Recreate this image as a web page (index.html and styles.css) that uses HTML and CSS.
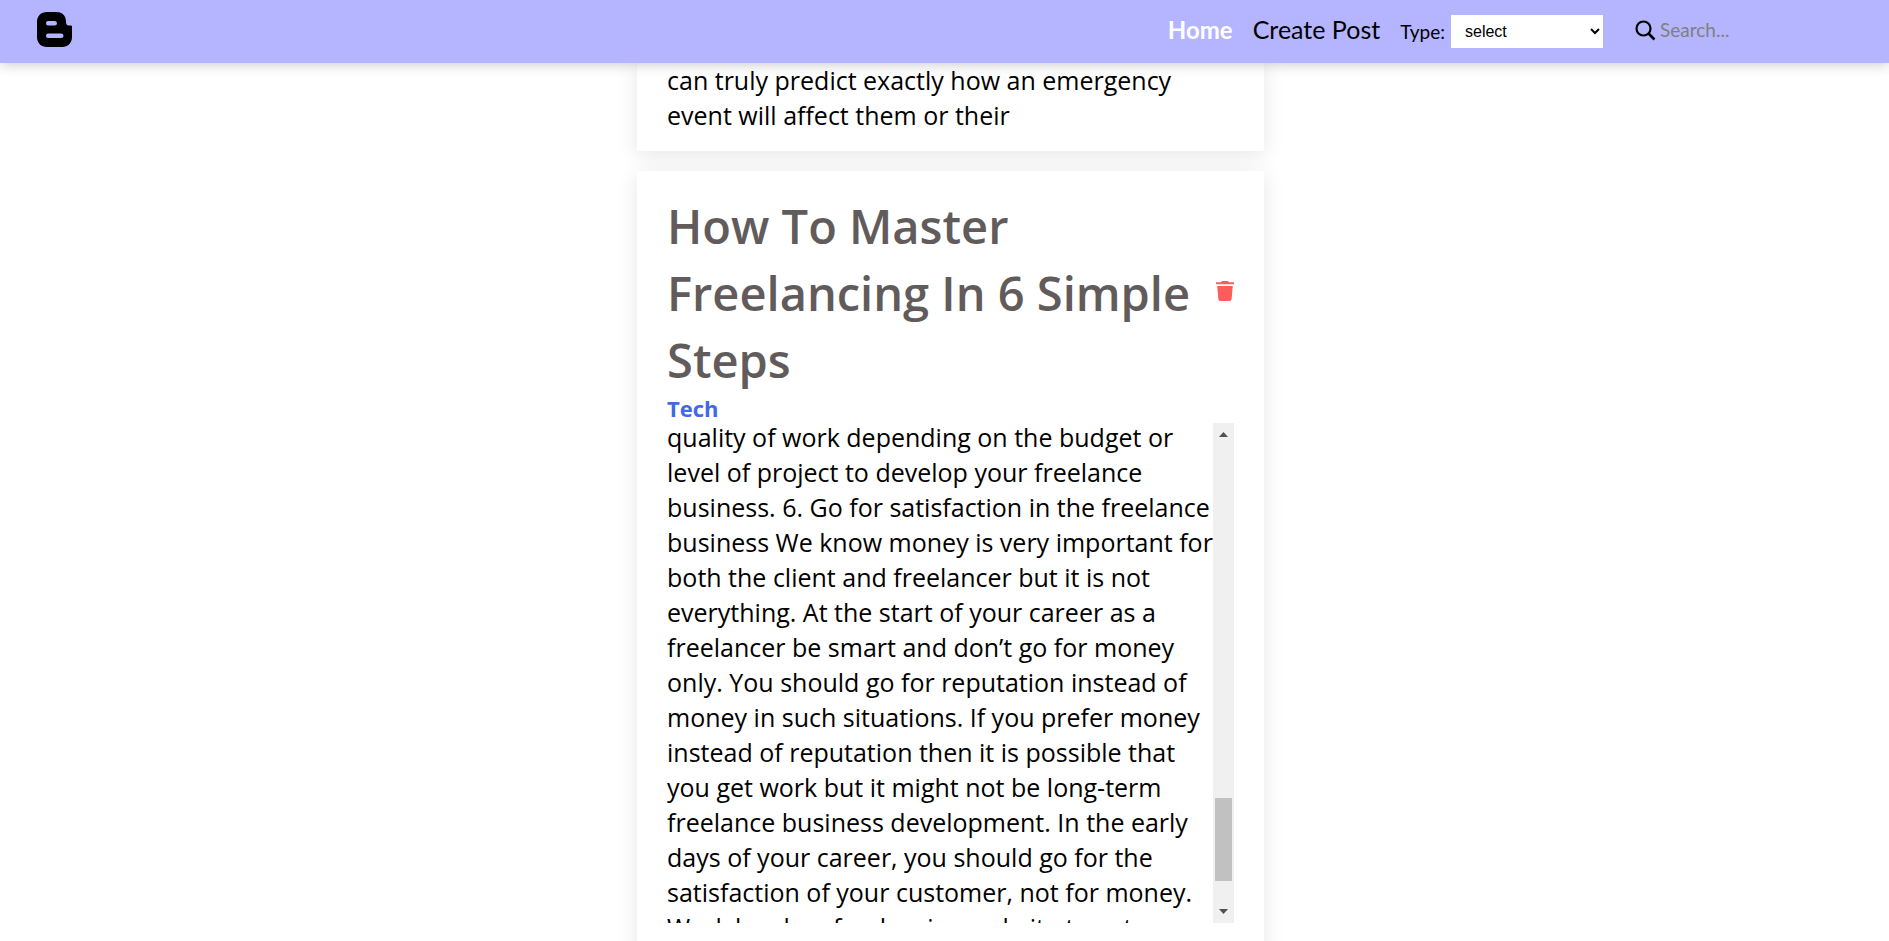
FILE: index.html
```html
<!DOCTYPE html>
<html lang="en">
<head>
<meta charset="utf-8">
<title>Blog</title>
<link rel="stylesheet" href="styles.css">
</head>
<body>
<header class="navbar">
  <a class="logo" href="#" aria-label="Blog home">
    <svg viewBox="0 0 36 36" width="36" height="36" aria-hidden="true">
      <path fill-rule="evenodd" d="M10 0H19.500C25.500 0 29 4 29 9.500C29 12 29.800 13.400 32 13.400H33.800Q35 13.400 35 14.600V25C35 31 31 35 25 35H10C4 35 0 31 0 25V10C0 4 4 0 10 0ZM11 9Q9 9 9 11.250Q9 13.500 11 13.500H17.500Q20 13.500 20 11.250Q20 9 17.500 9ZM11 21.500Q9 21.500 9 23.750Q9 26 11 26H24Q26.500 26 26.500 23.750Q26.500 21.500 24 21.500Z"/>
    </svg>
  </a>
  <nav class="links">
    <a class="link active" href="#">Home</a>
    <a class="link" href="#">Create Post</a>
  </nav>
  <div class="filter">
    <label for="type">Type:</label>
    <select id="type" class="select"><option>select</option></select>
  </div>
  <div class="search">
    <label for="q" aria-label="Search">
      <svg class="glass" viewBox="0 0 21 21" width="21" height="21" aria-hidden="true"><circle cx="8.500" cy="8.500" r="7" fill="none" stroke="#000" stroke-width="2.200"/><path d="M13.500 13.500L19.500 19.500" stroke="#000" stroke-width="2.600"/></svg>
    </label>
    <input id="q" class="query" type="text" placeholder="Search...">
  </div>
</header>
<main class="feed">
  <article class="card card-first">
    <p class="text">can truly predict exactly how an emergency<br>event will affect them or their</p>
  </article>
  <article class="card">
    <div class="head">
      <h1 class="title">How To Master<br>Freelancing In 6 Simple<br>Steps</h1>
      <button class="delete" type="button" aria-label="Delete post">
        <svg viewBox="0 0 18 20" width="18" height="20" aria-hidden="true"><path d="M6 0H12L13 1.200H18V3.200H0V1.200H5ZM1.200 5H16.800L15.600 18.300Q15.400 20 13.800 20H4.200Q2.600 20 2.400 18.300Z" fill="#ff5c5c"/></svg>
      </button>
    </div>
    <p class="tag">Tech</p>
    <div class="scroller">
      <p class="text">quality of work depending on the budget or<br>level of project to develop your freelance<br>business. 6. Go for satisfaction in the freelance<br>business We know money is very important for<br>both the client and freelancer but it is not<br>everything. At the start of your career as a<br>freelancer be smart and don’t go for money<br>only. You should go for reputation instead of<br>money in such situations. If you prefer money<br>instead of reputation then it is possible that<br>you get work but it might not be long-term<br>freelance business development. In the early<br>days of your career, you should go for the<br>satisfaction of your customer, not for money.<br>Work hard on freelancing website to get</p>
      <div class="track" aria-hidden="true">
        <svg class="arrow" viewBox="0 0 21 21" width="21" height="21"><path d="M6 14L10.500 9L15 14Z" fill="#505050"/></svg>
        <span class="thumb"></span>
        <svg class="arrow" viewBox="0 0 21 21" width="21" height="21"><path d="M6 7L10.500 12L15 7Z" fill="#505050"/></svg>
      </div>
    </div>
  </article>
</main>
</body>
</html>
```
FILE: styles.css
```css
* { box-sizing: border-box; margin: 0; padding: 0; }

body {
  background: #fff;
  color: #000;
  font-family: "Open Sans", "Noto Sans", sans-serif;
}

.navbar {
  position: sticky;
  top: 0;
  z-index: 2;
  display: flex;
  align-items: center;
  height: 63px;
  padding: 0 35px 0 37px;
  background: #b4b4ff;
  box-shadow: 0 2px 12px rgba(0, 0, 0, 0.2);
  font-family: Lato, sans-serif;
}

.logo { display: flex; margin: 0 auto 4px 0; }

.links { display: flex; align-items: baseline; gap: 20px; margin-right: 20px; padding-bottom: 6px; }
.link { color: #000; font-size: 25px; text-decoration: none; }
.link.active { color: #fff; font-size: 24px; font-weight: 700; }

.filter { display: flex; align-items: center; gap: 6px; margin-right: 32px; font-size: 19px; }
.select {
  width: 152px;
  height: 33px;
  padding: 0 10px;
  padding-right: 0;
  border: 0;
  border-radius: 0;
  background: #fff;
  color: #000;
  font: 16px "Liberation Sans", sans-serif;
}

.search { display: flex; align-items: center; gap: 4px; padding-bottom: 2px; }
.glass { display: block; }
.query {
  width: 194px;
  padding-bottom: 2px;
  border: 0;
  outline: 0;
  background: transparent;
  font: 19px Lato, sans-serif;
}
.query::placeholder { color: #808080; opacity: 1; }

.feed {
  display: grid;
  grid-template-columns: minmax(620px, 33.4%);
  justify-content: center;
  gap: 20px;
  padding-left: 12px;
}

.card {
  padding: 22px 30px 30px;
  background: #fff;
  box-shadow: 0 4px 20px rgba(0, 0, 0, 0.1);
}
.card-first { padding-top: 0; padding-bottom: 18px; }

.text {
  flex: 1;
  min-width: 0;
  font-size: 25px;
  line-height: 35px;
  white-space: nowrap;
}

.head { display: flex; align-items: center; justify-content: space-between; }
.title {
  color: #625b5b;
  font-size: 47px;
  font-weight: 600;
  line-height: 67px;
  white-space: nowrap;
}
.delete { display: flex; border: 0; background: none; padding-bottom: 6px; }

.tag { color: #4169e1; font-size: 22px; font-weight: 700; line-height: 29px; }

.scroller { display: flex; height: 500px; overflow: hidden; }
.scroller .text { margin-top: -3px; }
.track {
  display: flex;
  flex: none;
  flex-direction: column;
  width: 21px;
  background: #f0f0f0;
}
.arrow { display: block; }
.thumb { height: 83px; margin: auto 2px 0; background: #c1c1c1; }
.thumb + .arrow { margin-top: 21px; }
```
